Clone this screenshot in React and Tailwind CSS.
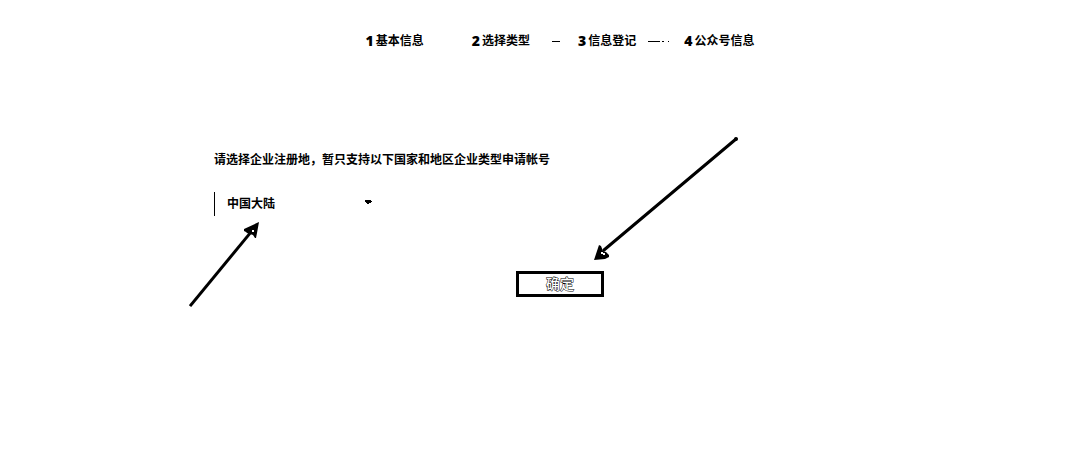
const steps = ['基本信息', '选择类型', '信息登记', '公众号信息'];
const dashes = ['', 'M22 6.5h8', 'M12 6.5h12M26 6.5h2M32 6.5h1'];

function Steps() {
  return (
    <ol className="flex justify-center leading-4">
      {steps.map((step, i) => (
        <li key={step} className="flex items-center whitespace-nowrap">
          <span className="flex gap-0.5">
            <b className="text-sm leading-4">{i + 1}</b>
            {step}
          </span>
          {i < dashes.length && (
            <svg className="h-3 w-12" viewBox="0 0 48 12" stroke="black" fill="none" shapeRendering="crispEdges" aria-hidden="true">
              <path d={dashes[i]} />
            </svg>
          )}
        </li>
      ))}
    </ol>
  );
}

export default function App() {
  return (
    <main className="overflow-x-clip bg-white pt-[33px] pb-40 pl-10 font-['Noto_Sans','Noto_Sans_CJK_SC',sans-serif] text-xs font-bold text-black">
      <div className="mx-auto max-w-[692px]">
        <Steps />
        <form className="pt-[103px]" onSubmit={(e) => e.preventDefault()}>
          <label htmlFor="region" className="block leading-4">
            请选择企业注册地，暂只支持以下国家和地区企业类型申请帐号
          </label>
          <div className="relative mt-6 w-42">
            <select id="region" className="block h-6 w-full appearance-none border-l border-black bg-white pl-3 outline-none">
              <option>中国大陆</option>
            </select>
            <svg className="pointer-events-none absolute top-2 right-2.5 h-1 w-2" viewBox="0 0 8 4" shapeRendering="crispEdges" aria-hidden="true">
              <path d="M1 0h6v1h1v1h-1v1h-2v1h-2v-1h-1v-1h-1z" />
            </svg>
            <svg className="pointer-events-none absolute top-7 -left-7 h-[90px] w-[80px]" viewBox="0 0 80 90" aria-hidden="true">
              <path d="M5 85L65 12" stroke="black" strokeWidth="3" strokeLinecap="square" fill="none" />
              <path d="M73 2L58 9v2l2 1 1 1 3 1 3 1 2 3h1l1-5z" />
              <path d="M66 10h2v2h-2z" fill="white" shapeRendering="crispEdges" />
            </svg>
          </div>
          <div className="relative mx-auto mt-[55px] w-22">
            <button type="submit" className="block h-[26px] w-full border-3 border-black bg-white text-sm font-medium leading-5 text-white [-webkit-text-stroke:1px_black] [paint-order:stroke_fill]">
              确定
            </button>
            <svg className="pointer-events-none absolute -top-[136px] left-[76px] h-[130px] w-[150px]" viewBox="0 0 150 130" aria-hidden="true">
              <path d="M144 4L12 115" stroke="black" strokeWidth="3" strokeLinecap="round" fill="none" />
              <circle cx="144" cy="4" r="2" />
              <path d="M2 125L7 110l2 1 2 5 3 1 3 3v2l-4 2z" />
              <path d="M9 117h2v1h2v2h-2v-1h-2z" fill="white" shapeRendering="crispEdges" />
            </svg>
          </div>
        </form>
      </div>
    </main>
  );
}
